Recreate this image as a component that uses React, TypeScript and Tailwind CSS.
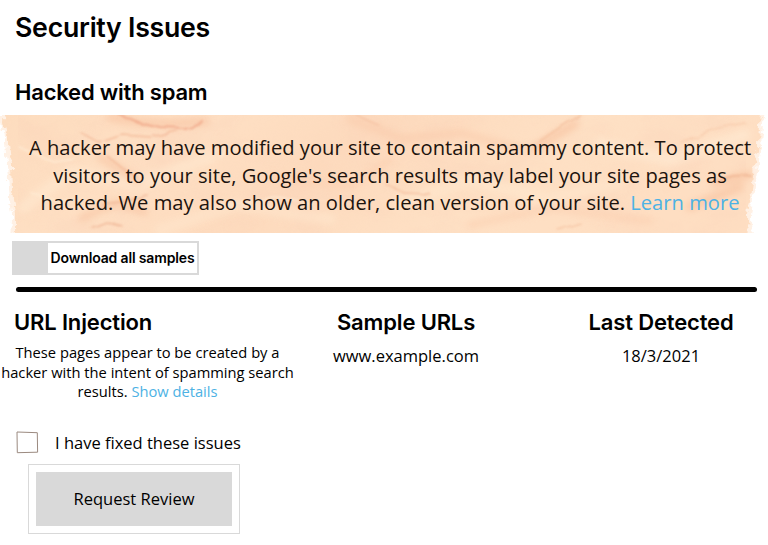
import { useState, type ReactNode } from "react";

function TornPaper() {
  return (
    <svg
      className="absolute inset-0 h-full w-full"
      viewBox="0 0 768 118"
      preserveAspectRatio="none"
      aria-hidden="true"
    >
      <defs>
        <linearGradient id="paper" x1="0" y1="0" x2="1" y2="0.25">
          <stop offset="0" stopColor="#fddcbe" />
          <stop offset="0.3" stopColor="#fedfc3" />
          <stop offset="0.5" stopColor="#fddabd" />
          <stop offset="0.75" stopColor="#fee0c4" />
          <stop offset="1" stopColor="#fedec2" />
        </linearGradient>
        <filter id="soft" x="-20%" y="-20%" width="140%" height="140%">
          <feGaussianBlur stdDeviation="3.5" />
        </filter>
        <filter id="crease" x="-20%" y="-20%" width="140%" height="140%">
          <feTurbulence type="fractalNoise" baseFrequency="0.06" numOctaves="2" seed="8" />
          <feDisplacementMap in="SourceGraphic" scale="6" />
          <feGaussianBlur stdDeviation="0.8" />
        </filter>
        <filter id="torn" x="-5%" y="-15%" width="110%" height="130%">
          <feTurbulence type="fractalNoise" baseFrequency="0.16" numOctaves="3" seed="3" />
          <feDisplacementMap
            in="SourceGraphic"
            scale="9"
            xChannelSelector="R"
            yChannelSelector="G"
          />
          <feGaussianBlur stdDeviation="0.4" />
        </filter>
        <filter id="grain" x="0" y="0" width="100%" height="100%">
          <feTurbulence type="fractalNoise" baseFrequency="0.016 0.03" numOctaves="4" seed="12" />
          <feColorMatrix values="0 0 0 0 0.95  0 0 0 0 0.64  0 0 0 0 0.48  1.6 0 0 0 -0.68" />
        </filter>
      </defs>
      <g filter="url(#torn)">
        <path
          d="M1 -12H766L763 8L761 30L758 50L756 65L753 85L751 100L752 130H11L12 100L9 75L7 50L5 28L1 8Z"
          fill="#fff1e5"
        />
        <path
          d="M5 -12H761L759 10L758 30L754 50L752 68L750 85L748 100L749 130H15L15 100L12 75L11 50L9 28L4 8Z"
          fill="url(#paper)"
        />
      </g>
      <svg x="18" width="728" height="118">
        <rect width="728" height="118" filter="url(#grain)" opacity="0.5" />
      </svg>
      <g filter="url(#soft)" fill="none" strokeLinecap="round" opacity="0.6">
        <path d="M110 2Q150 12 206 6" stroke="#f8c09d" strokeWidth="7" />
        <path d="M24 92L72 56L138 70L210 42" stroke="#ffe9d0" strokeWidth="12" />
        <path d="M100 42L138 66M82 103L116 88L145 97" stroke="#f7c19f" strokeWidth="7" />
        <path d="M160 115L235 90L330 104" stroke="#ffe6cc" strokeWidth="12" />
        <path d="M350 4L402 24L460 18L520 34" stroke="#facaaa" strokeWidth="8" />
        <path d="M400 88L470 66L548 83L620 68" stroke="#ffe8ce" strokeWidth="12" />
        <path d="M535 33L575 9M690 92L740 72M715 68L748 60" stroke="#f6bd9a" strokeWidth="8" />
        <path d="M600 30L670 45L745 20" stroke="#ffebd4" strokeWidth="12" />
        <path d="M270 62L350 71L390 45M470 110L550 93L650 106" stroke="#fbcdae" strokeWidth="6" />
      </g>
      <g filter="url(#crease)" fill="none" strokeLinecap="round" opacity="0.7">
        <path d="M118 -1L138 7L160 12L184 13L203 7" stroke="#ee9f80" strokeWidth="2" />
        <path d="M81 18L99 28L122 20L151 22L177 16M108 42L121 52L136 62" stroke="#f0af8d" strokeWidth="1.4" />
        <path d="M102 89L127 86L147 80M91 113L106 107L123 112" stroke="#edae8d" strokeWidth="1.6" />
        <path d="M356 0L371 7L380 11M385 69L405 78L430 79" stroke="#f2b796" strokeWidth="1.3" />
        <path d="M540 26L559 13L581 0M558 115L580 108" stroke="#f0b490" strokeWidth="1.3" />
        <path d="M716 66L733 61L750 60" stroke="#eeb08d" strokeWidth="2" />
        <path d="M681 27L718 13L745 8" stroke="#f4bf9d" strokeWidth="1.2" />
        <path d="M20 33L54 47L76 44M30 77L60 88L72 83M220 42L244 28L267 32M231 91L279 82L314 90" stroke="#fff0db" strokeWidth="1.6" />
      </g>
    </svg>
  );
}

interface ColumnProps {
  className: string;
  title: string;
  children: ReactNode;
}

function Column({ className, title, children }: Readonly<ColumnProps>) {
  return (
    <div className={className}>
      <h3 className="font-['Inter',sans-serif] text-[22px] leading-7 font-semibold tracking-[-0.15px]">
        {title}
      </h3>
      {children}
    </div>
  );
}

export default function App() {
  const [fixed, setFixed] = useState(false);

  return (
    <main className="h-[545px] w-[768px] overflow-hidden bg-white font-['Open_Sans',sans-serif] text-black">
      <h1 className="pt-[9px] pl-[15px] font-['Inter',sans-serif] text-[26.7px] leading-9 font-semibold tracking-[-0.25px]">
        Security Issues
      </h1>
      <h2 className="mt-[33px] pl-[15px] font-['Inter',sans-serif] text-[22px] leading-7 font-semibold tracking-[-0.2px]">
        Hacked with spam
      </h2>

      <section className="relative mt-[9px] h-[118px] pt-[19px] pl-[12px]">
        <TornPaper />
        <p className="relative text-center text-[20.17px] leading-[27.5px] whitespace-nowrap text-[#1c130d]">
          A hacker may have modified your site to contain spammy content. To protect
          <br />
          visitors to your site, Google's search results may label your site pages as
          <br />
          hacked. We may also show an older, clean version of your site.{" "}
          <a href="#learn" className="text-[#4db2e4]">
            Learn more
          </a>
        </p>
      </section>

      <button className="mt-2 ml-3 flex h-[34px] w-[187px] border-2 border-[#d9d9d9] bg-white">
        <span className="h-full w-[34px] bg-[#d9d9d9]" />
        <span className="flex-1 text-center font-['Inter',sans-serif] text-[14px] leading-[30px] font-semibold tracking-[-0.15px] whitespace-nowrap">
          Download all samples
        </span>
      </button>

      <div className="mt-3 ml-4 h-[5px] w-[741px] rounded-full bg-black" />

      <div className="mt-4 flex">
        <Column className="w-[295px] [&>h3]:pl-[14px]" title="URL Injection">
          <p className="mt-[7px] text-center text-[14.7px] leading-[19.5px] whitespace-nowrap">
            These pages appear to be created by a
            <br />
            hacker with the intent of spamming search
            <br />
            results.{" "}
            <a href="#details" className="text-[#4db2e4]">
              Show details
            </a>
          </p>
        </Column>
        <Column className="w-[222px] text-center" title="Sample URLs">
          <p className="mt-2 text-[16.5px] leading-6">www.example.com</p>
        </Column>
        <Column className="ml-[44px] w-[200px] text-center" title="Last Detected">
          <p className="mt-2 text-[16.5px] leading-6">18/3/2021</p>
        </Column>
      </div>

      <label className="mt-[29px] ml-4 flex h-6 items-center text-[16.5px] leading-6">
        <input
          type="checkbox"
          className="peer sr-only"
          checked={fixed}
          onChange={(e) => setFixed(e.target.checked)}
        />
        <svg width="23" height="23" viewBox="0 0 23 23" fill="none" aria-hidden="true">
          <path d="M1 1L21.3 1.7L21.6 21.2L1.3 21.7Z" stroke="#9b8a80" strokeWidth="1" />
          {fixed && <path d="M5 11L10 16L18 6" stroke="#333" strokeWidth="2" />}
        </svg>
        <span className="ml-4">I have fixed these issues</span>
      </label>

      <div className="mt-[9px] ml-7 h-[70px] w-[212px] border border-[#d9d9d9] p-[7px]">
        <button className="h-full w-full bg-[#d9d9d9] pt-0.5 text-[16.5px]">
          Request Review
        </button>
      </div>
    </main>
  );
}
